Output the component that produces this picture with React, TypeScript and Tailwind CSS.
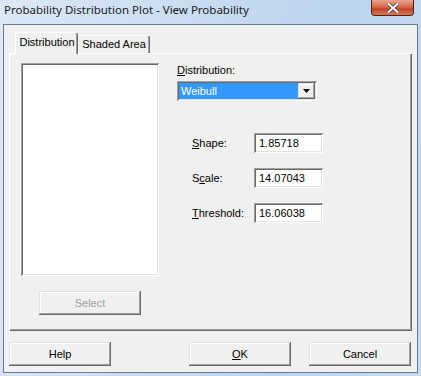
import React from "react";

const raised =
  "shadow-[inset_-1px_-1px_#696969,inset_1px_1px_#e3e3e3,inset_-2px_-2px_#a0a0a0,inset_2px_2px_#ffffff]";
const sunken =
  "shadow-[inset_1px_1px_#a0a0a0,inset_-1px_-1px_#ffffff,inset_2px_2px_#696969,inset_-2px_-2px_#e3e3e3]";

function Field({ children, value }: { children: React.ReactNode; value: string }) {
  return (
    <div className="flex items-center h-[20px]">
      <div className="w-[77px] pl-[15px] text-black whitespace-nowrap">{children}</div>
      <div className={`w-[69px] h-[20px] bg-white ${sunken} flex items-center pl-[5px] text-black`}>{value}</div>
    </div>
  );
}

function Btn({ children, cls = "", disabled = false }: { children: React.ReactNode; cls?: string; disabled?: boolean }) {
  return (
    <div
      className={`w-[102px] h-[24px] bg-[#f0f0f0] ${raised} flex items-center justify-center ${
        disabled ? "text-[#a0a0a0]" : "text-black"
      } ${cls}`}
    >
      {children}
    </div>
  );
}

export default function App() {
  return (
    <div
      className="w-[421px] h-[376px] flex flex-col bg-[linear-gradient(100deg,#dbe8f6_0%,#c9dcf1_40%,#bcd4ee_70%,#c6dbf1_100%)] text-[11px] leading-none"
      style={{ fontFamily: '"Liberation Sans", Arial, sans-serif' }}
    >
      {/* title bar */}
      <div className="h-[24px] flex items-start justify-between">
        <div className="pl-[4px] pt-[4px] text-[11.5px] text-[#1b1b1b]" style={{ fontFamily: '"Noto Sans", sans-serif' }}>
          Probability Distribution Plot - View Probability
        </div>
        <div className="mr-[7px] w-[43px] h-[16px] rounded-b-[4px] border border-[#5a1e12] border-t-0 bg-[linear-gradient(180deg,#e9a58c_0%,#d66a4a_45%,#c0432a_60%,#d97a55_100%)] flex items-center justify-center">
          <svg width="12" height="10" viewBox="0 0 12 10">
            <path d="M1.5 1 L10.5 9 M10.5 1 L1.5 9" stroke="#3d3d4a" strokeWidth="3.4" strokeLinecap="square" />
            <path d="M1.5 1 L10.5 9 M10.5 1 L1.5 9" stroke="#ffffff" strokeWidth="2" strokeLinecap="square" />
          </svg>
        </div>
      </div>
      {/* client */}
      <div className="mx-[3px] mb-[3px] flex-1 border border-[#6b7a8c] bg-[#f0f0f0] flex flex-col px-[5px]">
        {/* tabs */}
        <div className="flex items-end h-[28px] pl-[6px] relative z-10">
          <div className="w-[63px] h-[22px] bg-[#f0f0f0] border-t border-l border-white shadow-[inset_-1px_0_#696969,inset_-2px_0_#a0a0a0] rounded-t-[2px] flex items-center justify-center pb-[2px] text-black -mb-[1px]">
            Distribution
          </div>
          <div className="w-[72px] h-[18px] bg-[#f0f0f0] border-t border-white shadow-[inset_-1px_0_#696969,inset_-2px_0_#a0a0a0] rounded-t-[2px] flex items-center justify-center text-black">
            Shaded Area
          </div>
        </div>
        {/* panel */}
        <div className="h-[278px] border-t border-l border-white shadow-[inset_-1px_-1px_#696969,inset_-2px_-2px_#a0a0a0] flex pl-[11px] pt-[9px]">
          <div className="flex flex-col w-[138px]">
            <div className={`h-[213px] bg-white ${sunken}`} />
            <Btn cls="ml-[18px] mt-[15px]" disabled>
              Select
            </Btn>
          </div>
          <div className="ml-[18px] flex flex-col pt-[2px]">
            <div className="text-black h-[13px]">
              <u>D</u>istribution:
            </div>
            <div className={`mt-[3px] w-[140px] h-[20px] bg-white ${sunken} flex items-center p-[2px]`}>
              <div className="flex-1 h-[16px] bg-[#3399ff] text-white flex items-center pl-[2px]">Weibull</div>
              <div className={`w-[17px] h-[16px] bg-[#f0f0f0] ${raised} flex items-center justify-center`}>
                <svg width="7" height="4" viewBox="0 0 7 4">
                  <path d="M0 0 H7 L3.5 4 Z" fill="#000" />
                </svg>
              </div>
            </div>
            <div className="mt-[32px] flex flex-col gap-[15px]">
              <Field value="1.85718">
                <u>S</u>hape:
              </Field>
              <Field value="14.07043">
                S<u>c</u>ale:
              </Field>
              <Field value="16.06038">
                <u>T</u>hreshold:
              </Field>
            </div>
          </div>
        </div>
        {/* bottom buttons */}
        <div className="flex mt-[11px]">
          <Btn>Help</Btn>
          <Btn cls="ml-[78px]">
            <u>O</u>K
          </Btn>
          <Btn cls="ml-[18px]">Cancel</Btn>
        </div>
      </div>
    </div>
  );
}
